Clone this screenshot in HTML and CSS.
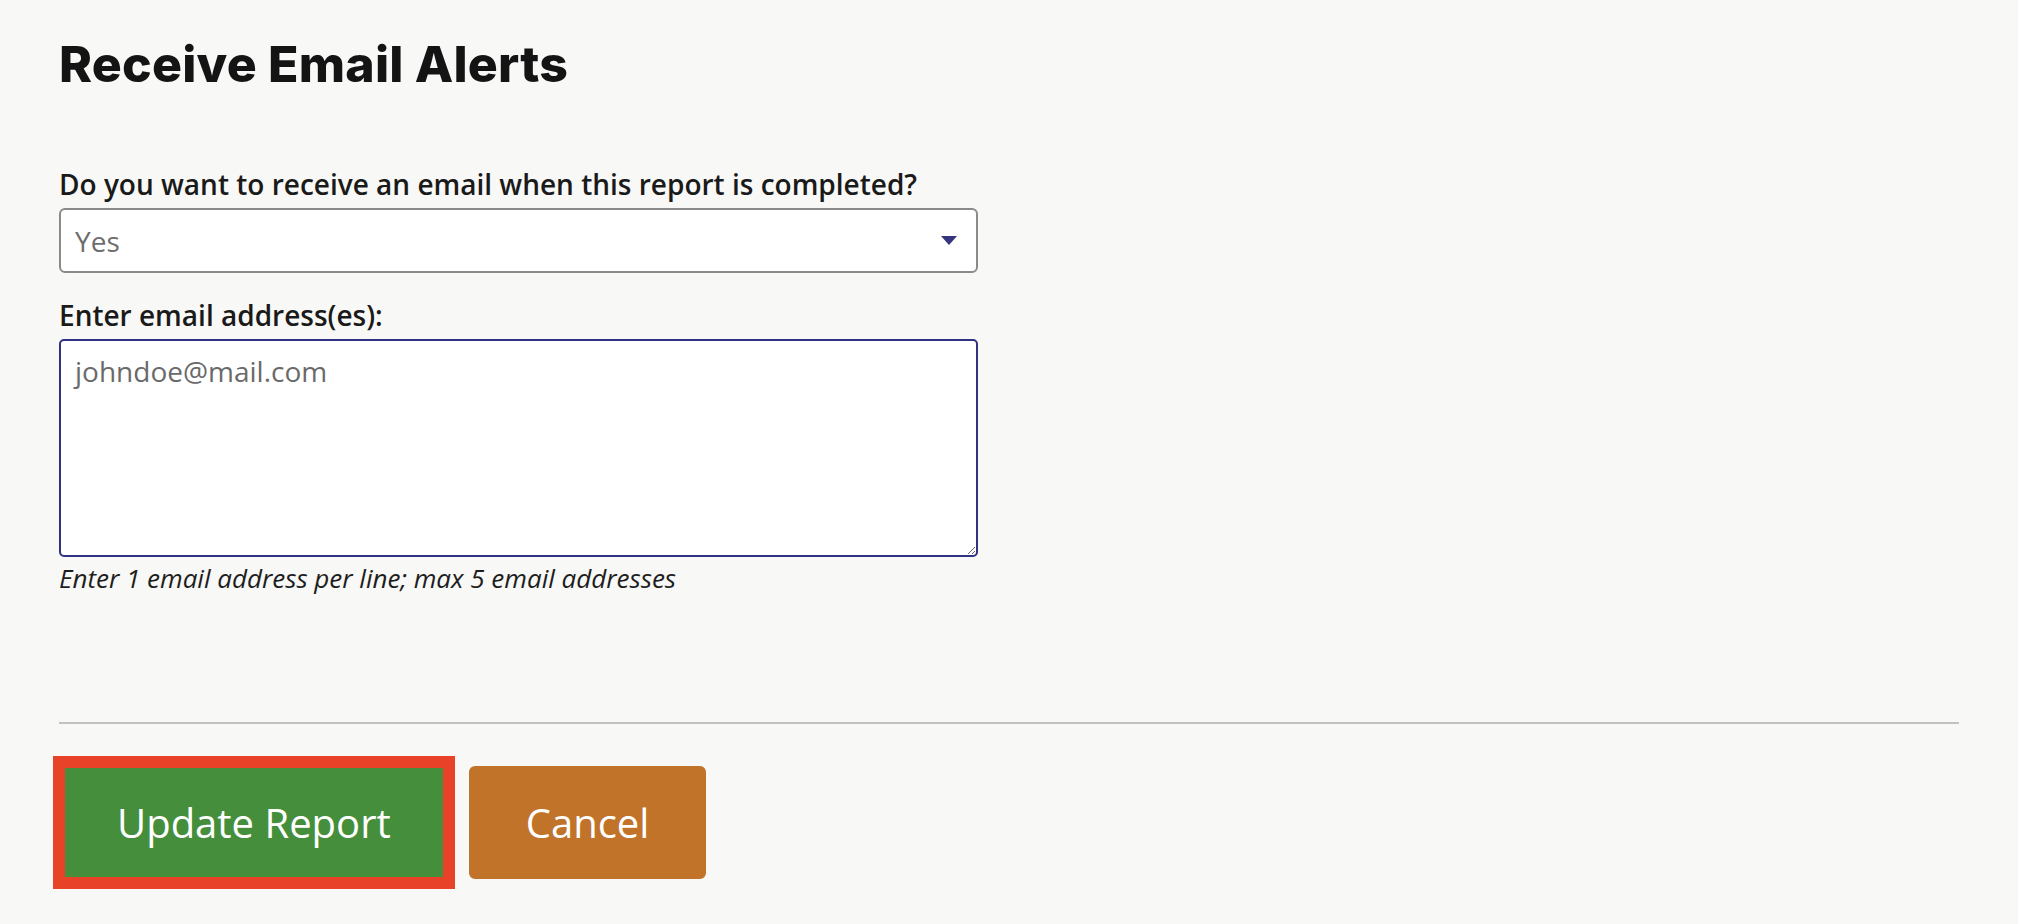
FILE: index.html
```html
<!DOCTYPE html>
<html lang="en">
<head>
<meta charset="utf-8">
<title>Receive Email Alerts</title>
<link rel="stylesheet" href="styles.css">
</head>
<body>
<main class="page">
  <h1 class="title">Receive Email Alerts</h1>

  <form class="form">
    <label class="label" for="notify">Do you want to receive an email when this report is completed?</label>
    <div class="select-wrap">
      <select id="notify" class="select">
        <option>Yes</option>
        <option>No</option>
      </select>
      <svg class="select-arrow" width="16" height="9" viewBox="0 0 16 9" aria-hidden="true"><polygon points="0,0 16,0 8,9" fill="#36337f"/></svg>
    </div>

    <label class="label" for="emails">Enter email address(es):</label>
    <textarea id="emails" class="textarea">johndoe@mail.com</textarea>
    <p class="hint">Enter 1 email address per line; max 5 email addresses</p>

    <hr class="divider">

    <div class="actions">
      <button type="button" class="btn btn-primary">Update Report</button>
      <button type="button" class="btn btn-cancel">Cancel</button>
    </div>
  </form>
</main>
</body>
</html>
```
FILE: styles.css
```css
html, body {
  margin: 0;
  padding: 0;
  background: #f8f8f6;
}

body {
  font-family: "Open Sans", "Liberation Sans", sans-serif;
  color: #1a1a1a;
}

.page {
  padding: 35px 59px 0 59px;
}

.title {
  margin: 0 0 72px 0;
  font-family: "Inter", "Liberation Sans", sans-serif;
  font-weight: 800;
  font-size: 50px;
  line-height: 58px;
  color: #141414;
  letter-spacing: 0.2px;
}

.form {
  display: flex;
  flex-direction: column;
}

.label {
  display: block;
  font-size: 28px;
  line-height: 38px;
  font-weight: 600;
  color: #1a1a1a;
  margin-bottom: 5px;
}

.select-wrap {
  position: relative;
  width: 919px;
  margin-bottom: 23px;
}

.select {
  display: block;
  width: 100%;
  height: 65px;
  box-sizing: border-box;
  -webkit-appearance: none;
  appearance: none;
  background: #ffffff;
  border: 2px solid #8a8a8a;
  border-radius: 6px;
  padding: 0 40px 0 14px;
  font-family: "Open Sans", "Liberation Sans", sans-serif;
  font-size: 28px;
  color: #6e6e6e;
  outline: none;
}

.select-arrow {
  position: absolute;
  right: 21px;
  top: 28px;
  pointer-events: none;
}

.textarea {
  display: block;
  width: 919px;
  height: 218px;
  box-sizing: border-box;
  margin: 0;
  background: #ffffff;
  border: 2px solid #2f3280;
  border-radius: 5px;
  padding: 11px 14px;
  font-family: "Open Sans", "Liberation Sans", sans-serif;
  font-size: 28px;
  line-height: 38px;
  color: #6a6a6a;
  outline: none;
}

.hint {
  margin: 4px 0 0 0;
  font-size: 26px;
  line-height: 34px;
  font-style: italic;
  color: #1e1e1e;
}

.divider {
  margin: 127px 0 0 0;
  border: 0;
  height: 2px;
  background: #c2c2c0;
}

.actions {
  display: flex;
  align-items: center;
  gap: 26px;
  margin-top: 42px;
  padding-left: 6px;
  padding-bottom: 16px;
}

.btn {
  font-family: "Open Sans", "Liberation Sans", sans-serif;
  font-size: 40px;
  line-height: 49px;
  color: #ffffff;
  border: 2px solid transparent;
  border-radius: 6px;
  padding: 30px 55px;
  cursor: pointer;
}

.btn-primary {
  background: #458f3c;
  border: 0;
  border-radius: 0;
  padding: 30px 52px;
  box-shadow: 0 0 0 12px #e84328;
  outline: none;
}

.btn-cancel {
  background: #c17329;
  border-color: #c17329;
}
```
